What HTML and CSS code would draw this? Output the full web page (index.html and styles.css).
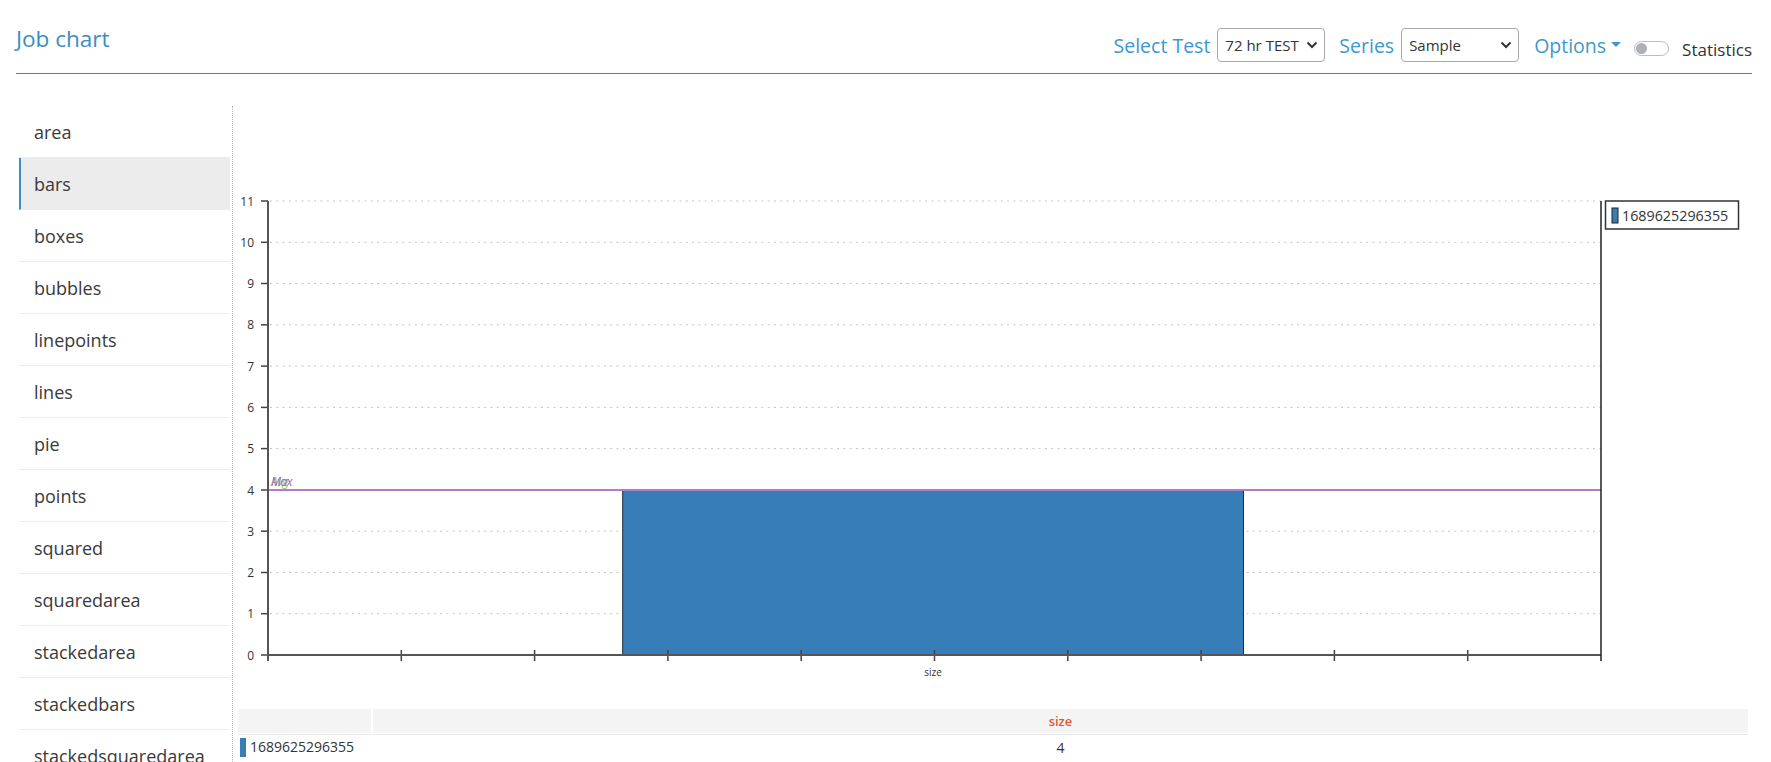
FILE: index.html
```html
<!DOCTYPE html>
<html lang="en">
<head>
<meta charset="utf-8">
<title>Job chart</title>
<link rel="stylesheet" href="styles.css">
</head>
<body>
<header class="topbar">
  <h1 class="title">Job chart</h1>
  <div class="controls">
    <span class="ctl-label">Select Test</span>
    <div class="select select-test"><span>72 hr TEST</span><svg class="chev" width="12" height="8" viewBox="0 0 12 8"><path d="M1.5 1.5 L6 6 L10.5 1.5" fill="none" stroke="#333" stroke-width="2"/></svg></div>
    <span class="ctl-label">Series</span>
    <div class="select select-series"><span>Sample</span><svg class="chev" width="12" height="8" viewBox="0 0 12 8"><path d="M1.5 1.5 L6 6 L10.5 1.5" fill="none" stroke="#333" stroke-width="2"/></svg></div>
    <span class="options">Options<span class="caret"></span></span>
    <span class="toggle"><span class="knob"></span></span>
    <span class="stat-label">Statistics</span>
  </div>
</header>
<div class="layout">
  <nav class="sidebar">
    <ul class="menu">
      <li class="item">area</li>
      <li class="item active">bars</li>
      <li class="item">boxes</li>
      <li class="item">bubbles</li>
      <li class="item">linepoints</li>
      <li class="item">lines</li>
      <li class="item">pie</li>
      <li class="item">points</li>
      <li class="item">squared</li>
      <li class="item">squaredarea</li>
      <li class="item">stackedarea</li>
      <li class="item">stackedbars</li>
      <li class="item">stackedsquaredarea</li>
    </ul>
  </nav>
  <main class="panel">
    <svg class="chart" width="1519" height="594" viewBox="0 0 1519 594">
      <g class="grid" stroke="#c4c4c4" stroke-width="1" stroke-dasharray="2 4.3">
        <line x1="37" y1="507.7" x2="1368" y2="507.7"/>
        <line x1="37" y1="466.5" x2="1368" y2="466.5"/>
        <line x1="37" y1="425.2" x2="1368" y2="425.2"/>
        <line x1="37" y1="342.6" x2="1368" y2="342.6"/>
        <line x1="37" y1="301.4" x2="1368" y2="301.4"/>
        <line x1="37" y1="260.1" x2="1368" y2="260.1"/>
        <line x1="37" y1="218.8" x2="1368" y2="218.8"/>
        <line x1="37" y1="177.5" x2="1368" y2="177.5"/>
        <line x1="37" y1="136.3" x2="1368" y2="136.3"/>
        <line x1="37" y1="95" x2="1368" y2="95"/>
      </g>
      <rect x="389.7" y="383.9" width="620.8" height="165.1" fill="#377eb8" stroke="#1f2d3a" stroke-width="1"/>
      <line x1="35" y1="384" x2="1368" y2="384" stroke="#b27cc8" stroke-width="2"/>
      <text x="38" y="380" class="ref-label" fill="#8cc25c">Avg</text>
      <text x="38" y="380" class="ref-label" fill="#9a68b4">Max</text>
      <g stroke="#444" stroke-width="1.5">
        <line x1="28" y1="549" x2="35" y2="549"/>
        <line x1="28" y1="507.7" x2="35" y2="507.7"/>
        <line x1="28" y1="466.5" x2="35" y2="466.5"/>
        <line x1="28" y1="425.2" x2="35" y2="425.2"/>
        <line x1="28" y1="384" x2="35" y2="384"/>
        <line x1="28" y1="342.6" x2="35" y2="342.6"/>
        <line x1="28" y1="301.4" x2="35" y2="301.4"/>
        <line x1="28" y1="260.1" x2="35" y2="260.1"/>
        <line x1="28" y1="218.8" x2="35" y2="218.8"/>
        <line x1="28" y1="177.5" x2="35" y2="177.5"/>
        <line x1="28" y1="136.3" x2="35" y2="136.3"/>
        <line x1="28" y1="95" x2="35" y2="95"/>
        <line x1="168.3" y1="544" x2="168.3" y2="555"/>
        <line x1="301.6" y1="544" x2="301.6" y2="555"/>
        <line x1="434.9" y1="544" x2="434.9" y2="555"/>
        <line x1="568.2" y1="544" x2="568.2" y2="555"/>
        <line x1="701.5" y1="544" x2="701.5" y2="555"/>
        <line x1="834.8" y1="544" x2="834.8" y2="555"/>
        <line x1="968.1" y1="544" x2="968.1" y2="555"/>
        <line x1="1101.4" y1="544" x2="1101.4" y2="555"/>
        <line x1="1234.7" y1="544" x2="1234.7" y2="555"/>
      </g>
      <line x1="35" y1="549" x2="1368" y2="549" stroke="#555" stroke-width="2"/>
      <line x1="35" y1="95" x2="35" y2="555" stroke="#555" stroke-width="2"/>
      <line x1="1368" y1="95" x2="1368" y2="555" stroke="#222" stroke-width="1.5"/>
      <g class="ylabels" text-anchor="end" dominant-baseline="central">
        <text x="21" y="549">0</text>
        <text x="21" y="507.7">1</text>
        <text x="21" y="466.5">2</text>
        <text x="21" y="425.2">3</text>
        <text x="21" y="384">4</text>
        <text x="21" y="342.6">5</text>
        <text x="21" y="301.4">6</text>
        <text x="21" y="260.1">7</text>
        <text x="21" y="218.8">8</text>
        <text x="21" y="177.5">9</text>
        <text x="21" y="136.3">10</text>
        <text x="21" y="95">11</text>
      </g>
      <text x="700" y="566" class="xlabel" text-anchor="middle" dominant-baseline="central">size</text>
      <rect x="1372.5" y="95" width="133" height="28" fill="#fff" stroke="#333" stroke-width="1.5"/>
      <rect x="1379" y="102" width="6" height="15" fill="#377eb8" stroke="#222" stroke-width="1"/>
      <text x="1389" y="109" class="legend-text" dominant-baseline="central">1689625296355</text>
    </svg>
    <table class="data">
      <thead>
        <tr><th class="c1"></th><th class="c2">size</th></tr>
      </thead>
      <tbody>
        <tr><td class="c1"><span class="swatch"></span>1689625296355</td><td class="c2 num">4</td></tr>
      </tbody>
    </table>
  </main>
</div>
</body>
</html>
```
FILE: styles.css
```css
html, body {
  margin: 0;
  padding: 0;
  overflow: hidden;
  background: #fff;
}
body {
  font-family: "Open Sans", "Noto Sans", sans-serif;
  color: #333;
}
.topbar {
  display: flex;
  justify-content: space-between;
  align-items: flex-start;
  height: 73px;
  margin: 0 19px 0 16px;
  border-bottom: 1px solid #3f84b5;
}
.title {
  margin: 0;
  padding-top: 24px;
  font-size: 22.5px;
  line-height: 30px;
  font-weight: 400;
  color: #3a8ec2;
}
.controls {
  display: flex;
  align-items: center;
  padding-top: 28px;
  height: 34px;
}
.ctl-label {
  font-size: 19.5px;
  color: #3d98cf;
  margin-right: 7px;
}
.select {
  display: flex;
  align-items: center;
  justify-content: space-between;
  box-sizing: border-box;
  height: 34px;
  border: 1px solid #a8a8a8;
  border-radius: 4px;
  padding: 0 6px 0 7px;
  font-size: 15px;
  color: #333;
  background: #fff;
}
.select-test {
  width: 108px;
  margin-right: 14px;
}
.select-series {
  width: 118px;
  margin-right: 15px;
}
.options {
  display: flex;
  align-items: center;
  font-size: 19.5px;
  color: #3d98cf;
  margin-right: 13px;
}
.caret {
  width: 0;
  height: 0;
  margin-left: 5px;
  margin-top: -1px;
  border-left: 5px solid transparent;
  border-right: 5px solid transparent;
  border-top: 5px solid #3d98cf;
}
.toggle {
  display: flex;
  align-items: center;
  box-sizing: border-box;
  width: 35px;
  height: 15px;
  margin-top: 7px;
  margin-right: 13px;
  border: 1px solid #bcbcbc;
  border-radius: 8px;
  padding-left: 1px;
}
.knob {
  width: 11px;
  height: 11px;
  border-radius: 50%;
  background: #adb1b6;
}
.stat-label {
  font-size: 17px;
  color: #333;
  margin-top: 8px;
}
.layout {
  display: flex;
  padding-top: 32px;
}
.sidebar {
  width: 211px;
  margin-left: 19px;
  margin-right: 2px;
  flex: none;
}
.menu {
  list-style: none;
  margin: 0;
  padding: 0;
}
.item {
  box-sizing: border-box;
  height: 52px;
  display: flex;
  align-items: center;
  padding-left: 15px;
  padding-top: 1px;
  border-bottom: 1px solid #ececec;
  font-size: 18px;
  color: #3a3a3a;
}
.item.active {
  background: #ececec;
  border-left: 2px solid #3a8fc0;
  padding-left: 13px;
}
.panel {
  flex: 1;
  margin-right: 19px;
  border-left: 1px dotted #b5b5b5;
  min-height: 700px;
}
.chart {
  display: block;
}
.ylabels text {
  font-family: "Open Sans", sans-serif;
  font-size: 12px;
  fill: #333;
}
.xlabel {
  font-family: "Open Sans", sans-serif;
  font-size: 10px;
  fill: #333;
}
.ref-label {
  font-family: "Open Sans", sans-serif;
  font-size: 12px;
  font-style: italic;
  letter-spacing: -0.5px;
}
.legend-text {
  font-family: "Open Sans", sans-serif;
  font-size: 14.3px;
  fill: #333;
}
.data {
  margin: 9px 0 0 3px;
  width: 1514px;
  border-collapse: separate;
  border-spacing: 2px 0;
  font-size: 14px;
  color: #333;
}
.data th {
  height: 24px;
  padding: 0;
  background: #f4f4f4;
  border-bottom: 1px solid #fff;
  font-size: 13px;
  font-weight: 600;
  color: #e4572e;
}
.data td {
  height: 24px;
  padding: 0;
  border-top: 1.5px solid #e8e8e8;
}
.data .c1 {
  width: 131px;
  text-align: left;
}
.data td.c1 {
  padding-left: 2px;
}
.data .c2 {
  text-align: center;
}
.swatch {
  display: inline-block;
  width: 6px;
  height: 19px;
  background: #377eb8;
  vertical-align: middle;
  margin-right: 4px;
  margin-top: -2px;
}
```
